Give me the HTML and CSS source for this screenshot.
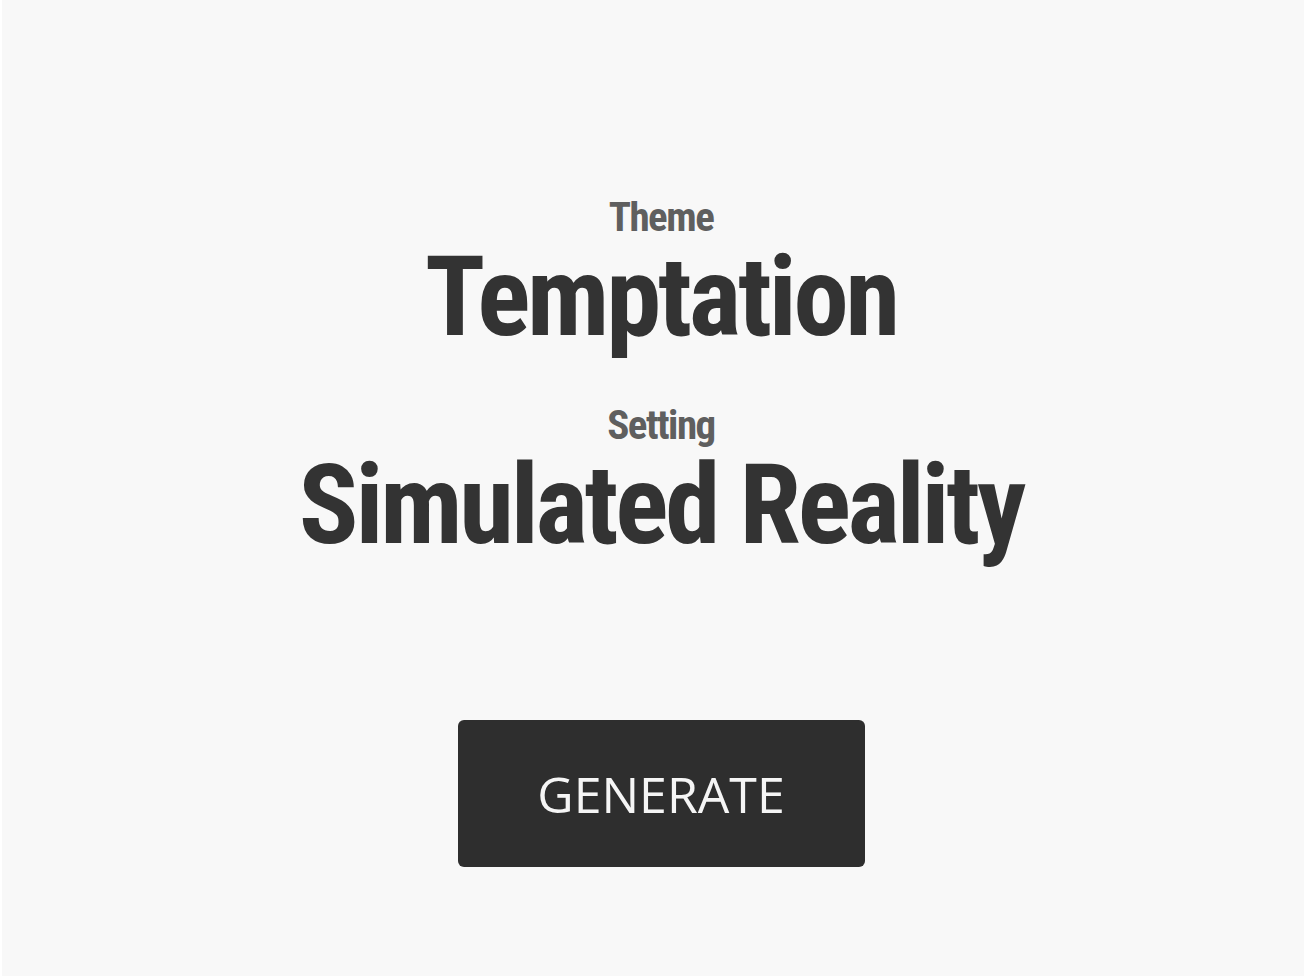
FILE: index.html
```html
<!DOCTYPE html>
<html lang="en">
<head>
    <meta charset="UTF-8">
    <meta name="viewport" content="width=device-width, initial-scale=1.0">
    <title>Story Prompt</title>
    <link rel="stylesheet" href="styles.css">
</head>
<body>

    <main class="prompt">
        <div class="field">
            <div class="label">Theme</div>
            <div class="value" id="theme">Temptation</div>
        </div>
        <div class="field">
            <div class="label">Setting</div>
            <div class="value" id="setting">Simulated Reality</div>
        </div>

        <button class="generate" type="button">GENERATE</button>
    </main>

</body>
</html>
```

FILE: styles.css
```css
html {
    height: 100%;
    background-color: #fff;
}
body {
    margin: 0;
    min-height: 100%;
    box-sizing: border-box;
    border: 2px solid #fff;
    border-top: none;
    background-color: #f8f8f8;
    font-family: "Roboto Condensed", "Roboto", sans-serif;
    font-stretch: condensed;
    text-align: center;
}
.prompt {
    display: flex;
    flex-direction: column;
    align-items: center;
    padding-top: 197px;
    padding-left: 16px;
}
.field {
    display: flex;
    flex-direction: column;
    align-items: center;
    gap: 4px;
    margin-bottom: 52px;
}
.label {
    font-size: 41px;
    line-height: 1;
    font-weight: bold;
    letter-spacing: -1.5px;
    color: #5f5f5f;
}
.value {
    font-size: 111px;
    line-height: 1;
    font-weight: bold;
    letter-spacing: -3.2px;
    color: #333;
}
.generate {
    margin-top: 107px;
    width: 407px;
    height: 147px;
    display: flex;
    justify-content: center;
    align-items: center;
    font-family: "Open Sans", sans-serif;
    font-stretch: normal;
    font-size: 50px;
    line-height: 1;
    color: #f5f5f5;
    background-color: #2e2e2e;
    border: none;
    border-radius: 6px;
    cursor: pointer;
}
```
